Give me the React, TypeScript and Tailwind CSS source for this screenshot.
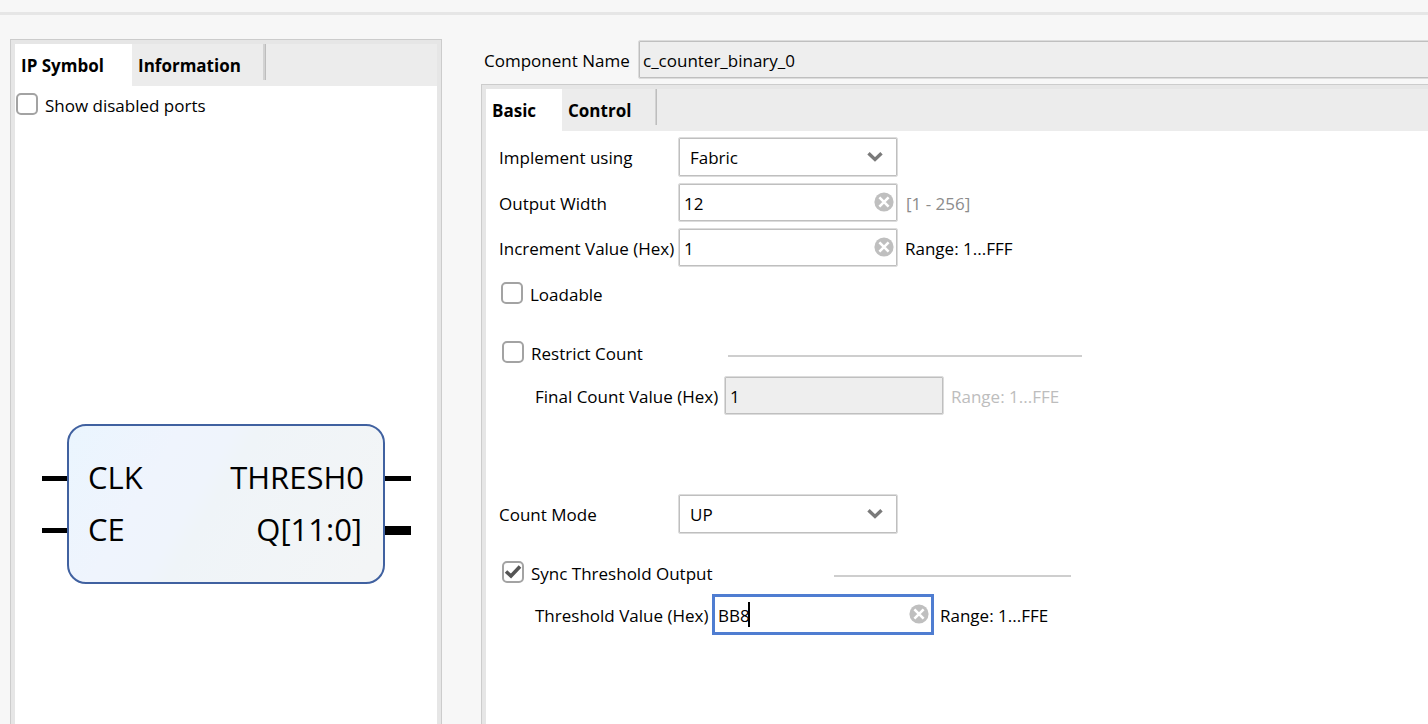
import { useState, type ReactNode } from "react";

function Tabs({ names, last }: { names: { label: string; width: string }[]; last: string }) {
  const [active, setActive] = useState(0);
  return (
    <div role="tablist" className="flex h-[42px] bg-[#ececec]">
      {names.map((tab, i) => (
        <button
          key={tab.label}
          type="button"
          role="tab"
          aria-selected={i === active}
          onClick={() => setActive(i)}
          className={`${tab.width} h-[42px] pt-0.5 pl-1.5 text-left text-[17px] font-bold ${i === active ? "bg-white" : ""}`}
        >
          {tab.label}
        </button>
      ))}
      <div className={`${last} h-9 border-r border-[#bdbdbd] bg-[#d2d2d2]`} />
    </div>
  );
}

function Check({ id, label, defaultChecked }: { id: string; label: string; defaultChecked?: boolean }) {
  return (
    <div className="flex h-[23px] items-start gap-[7px]">
      <span className="grid shrink-0">
        <input
          id={id}
          type="checkbox"
          defaultChecked={defaultChecked}
          className="peer col-start-1 row-start-1 size-[22px] appearance-none rounded-[5px] border-2 border-[#a3a3a3] bg-white"
        />
        <svg
          viewBox="0 0 22 22"
          aria-hidden="true"
          className="pointer-events-none invisible col-start-1 row-start-1 size-[22px] peer-checked:visible"
        >
          <path d="M4 10.5 L9 15 L18 5.5" fill="none" stroke="#555" strokeWidth="3.6" />
        </svg>
      </span>
      <label htmlFor={id} className="pt-px">
        {label}
      </label>
    </div>
  );
}

function Choice({ id, options }: { id: string; options: string[] }) {
  return (
    <div className="relative w-[220px]">
      <select
        id={id}
        className="h-10 w-full appearance-none rounded-xs border border-[#dcdcdc] bg-white pt-0.5 pl-[11px] text-[17px] inset-ring inset-ring-[#bfbfbf]"
      >
        {options.map((o) => (
          <option key={o}>{o}</option>
        ))}
      </select>
      <svg viewBox="0 0 16 12" aria-hidden="true" className="pointer-events-none absolute top-3.5 right-[15px] h-3 w-4">
        <path d="M1.5 2.2 L8 8.5 L14.5 2.2" fill="none" stroke="#7a7a7a" strokeWidth="3.4" />
      </svg>
    </div>
  );
}

function Field({ id, value, focused, disabled }: { id: string; value: string; focused?: boolean; disabled?: boolean }) {
  const [text, setText] = useState(value);
  return (
    <div className={focused ? "relative w-[222px]" : "relative w-[220px]"}>
      <input
        id={id}
        type="text"
        value={text}
        disabled={disabled}
        onChange={(e) => setText(e.target.value)}
        className={`w-full pt-0.5 pr-8 text-[17px] text-black outline-none ${
          focused
            ? "h-[41px] border-3 border-[#4f7dd1] pl-[3px]"
            : "h-[39px] rounded-xs border border-[#dcdcdc] pl-[5px] inset-ring inset-ring-[#bfbfbf]"
        } ${disabled ? "bg-[#eeeeee]" : "bg-white"}`}
      />
      {focused && <span className="absolute top-2 left-9 h-[25px] w-0.5 bg-black" />}
      {!disabled && (
        <button
          type="button"
          aria-label="Clear"
          onClick={() => setText("")}
          className={focused ? "absolute top-2.5 right-[5px]" : "absolute top-[9px] right-1"}
        >
          <svg viewBox="0 0 20 20" className="size-5">
            <circle cx="10" cy="10" r="9.6" fill="#bfbfbf" />
            <path d="M5.4 5.4 L14.6 14.6 M14.6 5.4 L5.4 14.6" stroke="#fff" strokeWidth="2.6" />
          </svg>
        </button>
      )}
    </div>
  );
}

function Row({ id, label, className, labelWidth, children }: { id: string; label: string; className: string; labelWidth: string; children: ReactNode }) {
  return (
    <div className={`flex items-center ${className}`}>
      <label htmlFor={id} className={`${labelWidth} shrink-0 pt-0.5 whitespace-nowrap`}>
        {label}
      </label>
      {children}
    </div>
  );
}

function CounterSymbol() {
  return (
    <svg viewBox="0 0 369 160" role="img" aria-label="Counter block" className="h-40 w-[369px]">
      <defs>
        <linearGradient id="body" gradientUnits="userSpaceOnUse" x1="26" y1="0" x2="310" y2="170">
          <stop offset="0" stopColor="#eaf5fe" />
          <stop offset="0.3" stopColor="#eff4fd" />
          <stop offset="0.44" stopColor="#eff4fc" />
          <stop offset="0.5" stopColor="#eff4f8" />
          <stop offset="1" stopColor="#f3f5f6" />
        </linearGradient>
      </defs>
      <rect x="26" y="1" width="316" height="158" rx="18" fill="url(#body)" stroke="#4061a0" strokeWidth="2" />
      <path d="M0 54.5 H25 M0 106.5 H25 M343 54.5 H369" stroke="#000" strokeWidth="5" />
      <path d="M343 106.5 H369" stroke="#000" strokeWidth="9" />
      <g fontSize="31">
        <text x="46" y="65">CLK</text>
        <text x="46" y="117">CE</text>
        <text x="322" y="65" textAnchor="end">THRESH0</text>
        <text x="320" y="117" textAnchor="end">Q[11:0]</text>
      </g>
    </svg>
  );
}

export default function App() {
  return (
    <div className="flex min-h-screen flex-col overflow-x-clip bg-[#f7f7f7] font-['Open_Sans','Noto_Sans',sans-serif] text-[17px] leading-6 text-black">
      <header className="h-[15px] border-b-3 border-[#e6e6e6]" />
      <main className="flex flex-1 gap-[39px] pt-6 pl-2.5">
        <section className="flex w-[432px] shrink-0 flex-col border border-b-0 border-[#cccccc] bg-[#e6e6e6] px-1 pt-1">
          <Tabs
            names={[
              { label: "IP Symbol", width: "w-[117px]" },
              { label: "Information", width: "w-[131px]" },
            ]}
            last="w-[3px]"
          />
          <div className="flex-1 bg-white pt-[7px] pl-px">
            <Check id="show-disabled" label="Show disabled ports" />
            <div className="mt-[308px] pl-[26px]">
              <CounterSymbol />
            </div>
          </div>
        </section>
        <section className="flex min-w-0 flex-1 flex-col">
          <div className="flex h-[45px] items-start pl-[3px]">
            <label htmlFor="component-name" className="w-[154px] shrink-0 pt-2.5 whitespace-nowrap">
              Component Name
            </label>
            <input
              id="component-name"
              defaultValue="c_counter_binary_0"
              readOnly
              className="mt-px -mr-1 h-[39px] min-w-0 flex-1 rounded-l-xs border border-[#dcdcdc] bg-[#eeeeee] pt-0.5 pl-1 text-[17px] inset-ring inset-ring-[#bfbfbf]"
            />
          </div>
          <div className="flex flex-1 flex-col border-t border-l border-[#cccccc] bg-[#e6e6e6] pt-1 pl-1">
            <Tabs
              names={[
                { label: "Basic", width: "w-[76px]" },
                { label: "Control", width: "w-[93px]" },
              ]}
              last="w-0.5"
            />
            <form className="flex-1 bg-white pt-1.5 pl-[13px]">
              <Row id="implement" label="Implement using" className="" labelWidth="w-[179px]">
                <Choice id="implement" options={["Fabric", "DSP48"]} />
              </Row>
              <Row id="output-width" label="Output Width" className="mt-1.5" labelWidth="w-[179px]">
                <Field id="output-width" value="12" />
                <span className="ml-2 pt-0.5 text-[#8c8c8c]">[1 - 256]</span>
              </Row>
              <Row id="increment" label="Increment Value (Hex)" className="mt-1.5" labelWidth="w-[179px]">
                <Field id="increment" value="1" />
                <span className="ml-[7px] pt-0.5">Range: 1...FFF</span>
              </Row>
              <div className="mt-[15px] pl-0.5">
                <Check id="loadable" label="Loadable" />
              </div>
              <div className="mt-9 flex items-center pl-[3px]">
                <div className="w-[226px]">
                  <Check id="restrict" label="Restrict Count" />
                </div>
                <div className="mt-[7px] h-0.5 w-[354px] bg-[#cecece]" />
              </div>
              <Row id="final-count" label="Final Count Value (Hex)" className="mt-3 pl-9" labelWidth="w-[189px]">
                <Field id="final-count" value="1" disabled />
                <span className="ml-[7px] pt-0.5 text-[#bdbdbd]">Range: 1...FFE</span>
              </Row>
              <Row id="count-mode" label="Count Mode" className="mt-[79px]" labelWidth="w-[179px]">
                <Choice id="count-mode" options={["UP", "DOWN", "UPDOWN"]} />
              </Row>
              <div className="mt-[27px] flex items-center pl-[3px]">
                <div className="w-[332px]">
                  <Check id="sync-threshold" label="Sync Threshold Output" defaultChecked />
                </div>
                <div className="mt-[7px] h-0.5 w-[237px] bg-[#cecece]" />
              </div>
              <Row id="threshold" label="Threshold Value (Hex)" className="mt-2.5 pl-9" labelWidth="w-[177px]">
                <Field id="threshold" value="BB8" focused />
                <span className="ml-1.5 pt-0.5">Range: 1...FFE</span>
              </Row>
            </form>
          </div>
        </section>
      </main>
    </div>
  );
}
